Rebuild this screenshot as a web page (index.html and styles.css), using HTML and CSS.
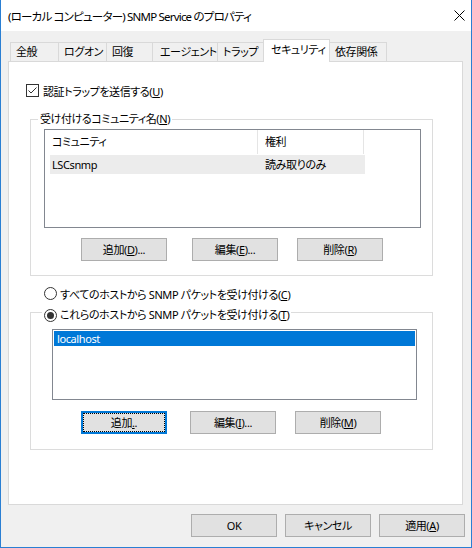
FILE: index.html
```html
<!DOCTYPE html>
<html lang="ja">
  <head>
    <meta charset="UTF-8" />
    <title>SNMP Service のプロパティ</title>
    <link rel="stylesheet" href="styles.css">
  </head>
  <body>
    <div class="window">
      <div class="titlebar">
        <span>(ローカル コンピューター) SNMP Service のプロパティ</span>
        <svg class="close" width="11" height="11" viewBox="0 0 11 11">
          <path d="M0.5 0.5L10.5 10.5M10.5 0.5L0.5 10.5" stroke="#000" stroke-width="1" />
        </svg>
      </div>

      <div class="client">
        <div class="tabs">
          <div class="tab w-general">全般</div>
          <div class="tab w-logon">ログオン</div>
          <div class="tab w-recovery">回復</div>
          <div class="tab w-agent">エージェント</div>
          <div class="tab w-traps">トラップ</div>
          <div class="tab active">セキュリティ</div>
          <div class="tab w-deps last">依存関係</div>
        </div>

        <div class="page">
          <div class="check-row">
            <svg class="box" width="13" height="13" viewBox="0 0 13 13">
              <rect x="0.5" y="0.5" width="12" height="12" fill="#fff" stroke="#333" />
              <path d="M2.5 6.5L5 9L10.5 3.5" fill="none" stroke="#333" stroke-width="1" />
            </svg>
            <span>認証トラップを送信する(<u>U</u>)</span>
          </div>

          <div class="group group-community">
            <div class="group-title">受け付けるコミュニティ名(<u>N</u>)</div>
            <div class="listview">
              <div class="lv-header">
                <div class="lv-col1">コミュニティ</div>
                <div class="lv-col2">権利</div>
              </div>
              <div class="lv-row">
                <div class="lv-cell1">LSCsnmp</div>
                <div class="lv-cell2">読み取りのみ</div>
              </div>
            </div>
            <div class="btn-row row-community">
              <button class="btn">追加(<u>D</u>)...</button>
              <button class="btn">編集(<u>E</u>)...</button>
              <button class="btn">削除(<u>R</u>)</button>
            </div>
          </div>

          <div class="radio-row">
            <svg width="13" height="13" viewBox="0 0 13 13">
              <circle cx="6.5" cy="6.5" r="6" fill="#fff" stroke="#333" />
            </svg>
            <span>すべてのホストから SNMP パケットを受け付ける(<u>C</u>)</span>
          </div>

          <div class="group group-hosts">
            <div class="group-title radio-title">
              <svg width="13" height="13" viewBox="0 0 13 13">
                <circle cx="6.5" cy="6.5" r="6" fill="#fff" stroke="#333" />
                <circle cx="6.5" cy="6.5" r="3.5" fill="#333" />
              </svg>
              <span>これらのホストから SNMP パケットを受け付ける(<u>T</u>)</span>
            </div>
            <div class="listbox">
              <div class="lb-item selected">localhost</div>
            </div>
            <div class="btn-row row-hosts">
              <button class="btn focused">追加<u>.</u>.</button>
              <button class="btn">編集(<u>I</u>)...</button>
              <button class="btn">削除(<u>M</u>)</button>
            </div>
          </div>
        </div>

        <div class="footer">
          <button class="btn">OK</button>
          <button class="btn">キャンセル</button>
          <button class="btn">適用(<u>A</u>)</button>
        </div>
      </div>
    </div>
  </body>
</html>
```

FILE: styles.css
```css
* {
  box-sizing: border-box;
}
body {
  margin: 0;
  font-family: "Noto Sans", "Noto Sans CJK JP", sans-serif;
  font-size: 11px;
  letter-spacing: -0.4px;
  font-feature-settings: "palt";
  color: #000;
}
u {
  text-underline-offset: 1px;
}

/* window frame */
.window {
  width: 472px;
  height: 548px;
  border: 1px solid #2a7fd3;
  border-top: none;
  background: #f0f0f0;
  display: flex;
  flex-direction: column;
}
.titlebar {
  height: 31px;
  flex: none;
  background: #fff;
  display: flex;
  align-items: center;
  justify-content: space-between;
  padding: 0 6px 0 7px;
  font-size: 11.5px;
  letter-spacing: -0.8px;
}
.client {
  flex: 1;
  padding: 8px 7px 0;
}

/* tabs */
.tabs {
  display: flex;
  align-items: flex-end;
  height: 22px;
  padding-left: 2px;
}
.tab {
  height: 19px;
  border: 1px solid #d9d9d9;
  border-right: none;
  border-bottom: none;
  padding-left: 5px;
  line-height: 18px;
  white-space: nowrap;
}
.w-general { width: 48px; }
.w-logon { width: 48px; }
.w-recovery { width: 46px; }
.w-agent { width: 65px; padding-left: 7px; }
.w-traps { width: 46px; }
.w-deps { width: 57px; border-left: none; }
.tab.last {
  border-right: 1px solid #d9d9d9;
}
.tab.active {
  width: 67px;
  height: 23px;
  margin-bottom: -1px;
  padding: 1px 0 0 7px;
  background: #fff;
  border-right: 1px solid #d9d9d9;
  position: relative;
  z-index: 1;
}

/* property page */
.page {
  width: 455px;
  height: 444px;
  border: 1px solid #d9d9d9;
  background: #fff;
}
.check-row,
.radio-row {
  display: flex;
  align-items: center;
  gap: 4px;
  height: 13px;
  white-space: nowrap;
}
.check-row {
  margin: 22px 0 0 17px;
}
.radio-row {
  margin: 11px 0 0 35px;
  gap: 3px;
}
.check-row svg,
.radio-row svg,
.radio-title svg {
  flex: none;
}

/* group boxes */
.group {
  width: 403px;
  margin-left: 21px;
  border: 1px solid #dcdcdc;
}
.group-community {
  margin-top: 22px;
  padding-bottom: 14px;
}
.group-hosts {
  margin-top: 12px;
  padding-bottom: 15px;
}
.group-title {
  width: max-content;
  height: 16px;
  line-height: 16px;
  margin: -9px 0 0 7px;
  padding: 0 2px;
  background: #fff;
}
.radio-title {
  display: flex;
  align-items: center;
  gap: 3px;
  margin: -6px 0 0 11px;
}

/* community list view */
.listview {
  width: 377px;
  height: 99px;
  margin: 2px 0 0 13px;
  border: 1px solid #828790;
  background: #fff;
}
.lv-header {
  display: flex;
  height: 24px;
  line-height: 24px;
}
.lv-col1,
.lv-col2 {
  border-right: 1px solid #e5e5e5;
  padding-left: 7px;
}
.lv-col1 {
  width: 213px;
}
.lv-col2 {
  width: 106px;
}
.lv-row {
  display: flex;
  width: 315px;
  height: 19px;
  line-height: 19px;
  margin: 1px 0 0 5px;
  background: #ececec;
}
.lv-cell1 {
  width: 208px;
  padding-left: 2px;
}
.lv-cell2 {
  padding-left: 7px;
}

/* hosts list box */
.listbox {
  width: 365px;
  height: 71px;
  margin: 6px 0 0 21px;
  padding: 1px;
  border: 1px solid #828790;
  background: #fff;
}
.lb-item {
  height: 15px;
  line-height: 15px;
  padding-left: 3px;
}
.lb-item.selected {
  background: #0078d7;
  color: #fff;
}

/* buttons */
.btn {
  width: 86px;
  height: 23px;
  padding: 0;
  border: 1px solid #adadad;
  background: #e1e1e1;
  font: inherit;
  letter-spacing: inherit;
  color: #000;
  line-height: 20px;
}
.btn.focused {
  border-color: #0078d7;
  box-shadow: inset 0 0 0 1px #0078d7;
  outline: 1px dotted #000;
  outline-offset: -3px;
}
.btn-row {
  display: flex;
  padding-left: 50px;
}
.row-community {
  margin-top: 10px;
}
.row-community .btn + .btn {
  margin-left: 25px;
}
.row-community .btn:last-child {
  margin-left: 19px;
}
.row-hosts {
  margin-top: 11px;
}
.row-hosts .btn + .btn {
  margin-left: 23px;
}
.row-hosts .btn:last-child {
  margin-left: 19px;
}
.footer {
  display: flex;
  justify-content: flex-end;
  gap: 8px;
  margin: 9px -1px 0 0;
}
```
